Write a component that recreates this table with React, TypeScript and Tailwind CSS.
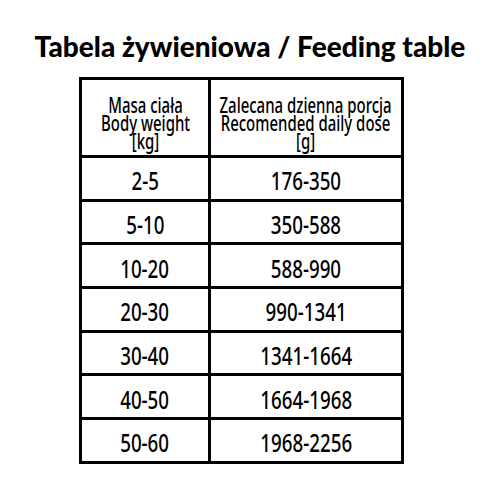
import React from "react";

const rows: [string, string][] = [
  ["2-5", "176-350"],
  ["5-10", "350-588"],
  ["10-20", "588-990"],
  ["20-30", "990-1341"],
  ["30-40", "1341-1664"],
  ["40-50", "1664-1968"],
  ["50-60", "1968-2256"],
];

export default function App() {
  return (
    <div className="w-[500px] h-[500px] bg-white text-black relative">
      <div className="pt-[30px] h-[77px] text-center text-[28px] font-[900] leading-[32px] whitespace-nowrap" style={{ fontFamily: "Lato, sans-serif" }}>
        Tabela żywieniowa / Feeding table
      </div>
      <div className="ml-[79px] w-[325px] border-[3px] border-black" style={{ fontFamily: "'Noto Sans', sans-serif" }}>
        <div className="flex h-[75px]">
          <div className="w-[126px] shrink-0 border-r-[3px] border-black box-content flex items-center justify-center text-center text-[22px] leading-[18px] pt-[9px] font-medium">
            <div className="scale-x-[0.68] whitespace-nowrap">Masa ciała<br />Body weight<br />[kg]</div>
          </div>
          <div className="flex-1 min-w-0 flex items-center justify-center text-center text-[22px] leading-[18px] pt-[9px] font-medium">
            <div className="scale-x-[0.68] whitespace-nowrap">Zalecana dzienna porcja<br />Recomended daily dose<br />[g]</div>
          </div>
        </div>
        {rows.map(([a, b]) => (
          <div key={a} className="flex h-[43.7px] border-t-[3px] border-black text-[25px] leading-[30px] font-medium">
            <div className="w-[126px] shrink-0 border-r-[3px] border-black box-content flex items-center justify-center pt-[4px]">
              <span className="scale-x-[0.75] whitespace-nowrap">{a}</span>
            </div>
            <div className="flex-1 min-w-0 flex items-center justify-center pt-[4px]">
              <span className="scale-x-[0.75] whitespace-nowrap">{b}</span>
            </div>
          </div>
        ))}
      </div>
    </div>
  );
}
